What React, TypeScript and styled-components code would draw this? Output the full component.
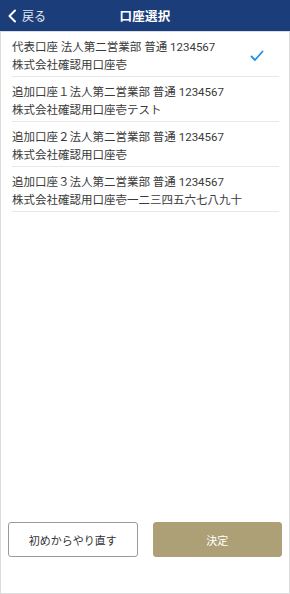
import React, { useState } from "react";
import styled, { createGlobalStyle } from "styled-components";

const Global = createGlobalStyle`
  html, body { margin: 0; padding: 0; background: #fff; }
  body { font-family: Roboto, "Noto Sans CJK JP", sans-serif; }
  * { box-sizing: border-box; }
`;

const Page = styled.div`
  width: 290px;
  height: 594px;
  display: flex;
  flex-direction: column;
  border: 1px solid #dcdcdc;
  border-top: none;
  background: #fff;
`;

const Header = styled.header`
  height: 32px;
  margin: 0 -1px;
  background: #1b3e7b;
  display: grid;
  grid-template-columns: 1fr auto 1fr;
  align-items: center;
  color: #fff;
  border-bottom: 1px solid #d9dde6;
`;

const Back = styled.button`
  justify-self: start;
  display: flex;
  align-items: center;
  gap: 5px;
  background: none;
  border: none;
  padding: 0 0 0 7px;
  color: #e6e9f0;
  font-family: Roboto, "Noto Sans CJK JP", sans-serif;
  font-size: 12px;
  cursor: pointer;
`;

const Title = styled.h1`
  margin: 0;
  font-size: 12.5px;
  font-weight: 700;
  letter-spacing: 0.3px;
`;

const List = styled.ul`
  list-style: none;
  margin: 0;
  padding: 0 10px 0 11px;
  flex: 1;
`;

const Row = styled.li`
  display: flex;
  align-items: center;
  padding: 6px 0 2px;
  border-bottom: 1px solid #e8e8e8;
  cursor: pointer;
`;

const Texts = styled.div`
  flex: 1;
  color: #3a3a3a;
  font-size: 11.5px;
  line-height: 18px;
  white-space: nowrap;
`;

const Check = styled.div`
  width: 16px;
  display: flex;
  justify-content: center;
  margin-right: 14px;
`;

const Footer = styled.div`
  display: flex;
  gap: 15px;
  padding: 0 7px 36px 7px;
`;

const Button = styled.button<{ $primary?: boolean }>`
  flex: 1;
  height: 35px;
  border-radius: 3px;
  font-family: Roboto, "Noto Sans CJK JP", sans-serif;
  font-size: 11px;
  cursor: pointer;
  border: 1px solid ${(p) => (p.$primary ? "#ad9f76" : "#9a9a9a")};
  background: ${(p) => (p.$primary ? "#ad9f76" : "#fff")};
  color: ${(p) => (p.$primary ? "#fff" : "#333")};
`;

const accounts = [
  { l1: "代表口座 法人第二営業部 普通 1234567", l2: "株式会社確認用口座壱" },
  { l1: "追加口座１法人第二営業部 普通 1234567", l2: "株式会社確認用口座壱テスト" },
  { l1: "追加口座２法人第二営業部 普通 1234567", l2: "株式会社確認用口座壱" },
  { l1: "追加口座３法人第二営業部 普通 1234567", l2: "株式会社確認用口座壱一二三四五六七八九十" },
];

export default function App() {
  const [sel, setSel] = useState(0);
  return (
    <>
      <Global />
      <Page>
        <Header>
          <Back>
            <svg width="10" height="14" viewBox="0 0 10 14">
              <path d="M8 1.5 L2.5 7 L8 12.5" fill="none" stroke="#fff" strokeWidth="2" strokeLinecap="round" strokeLinejoin="round" />
            </svg>
            戻る
          </Back>
          <Title>口座選択</Title>
          <div />
        </Header>
        <List>
          {accounts.map((a, i) => (
            <Row key={i} onClick={() => setSel(i)}>
              <Texts>
                <div>{a.l1}</div>
                <div>{a.l2}</div>
              </Texts>
              <Check>
                {sel === i && (
                  <svg width="14" height="12" viewBox="0 0 14 12">
                    <path d="M1.5 6.5 L5 10 L12.5 1.5" fill="none" stroke="#1f8ef1" strokeWidth="1.8" strokeLinecap="round" strokeLinejoin="round" />
                  </svg>
                )}
              </Check>
            </Row>
          ))}
        </List>
        <Footer>
          <Button>初めからやり直す</Button>
          <Button $primary>決定</Button>
        </Footer>
      </Page>
    </>
  );
}
